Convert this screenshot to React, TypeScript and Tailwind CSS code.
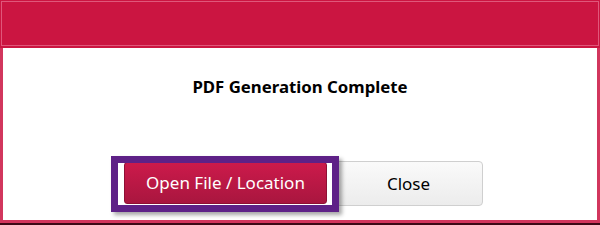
export default function App() {
  return (
    <div className="w-[600px] h-[225px] flex flex-col bg-[#d2365d] border-b-2 border-[#3d0a17] font-['Noto_Sans',sans-serif]">
      {/* title bar */}
      <div className="h-[48px] shrink-0 bg-[#cb1541] p-px pb-[2px]">
        <div className="h-full border border-[#e0577a]" />
      </div>

      {/* body */}
      <div className="relative flex-1 mx-[3px] mb-[3px] bg-white flex flex-col">
        <h1 className="mt-[29px] text-center text-[16.8px] font-bold leading-[20px] text-black">
          PDF Generation Complete
        </h1>

        <div className="mt-[64px] pl-[121px] flex items-start gap-[7px]">
          <button className="mt-px w-[203px] h-[42px] rounded-[3px] border border-[#8e1035] bg-gradient-to-b from-[#cc1a4b] to-[#a9163f] text-[17px] text-white">
            Open File / Location
          </button>
          <button className="w-[149px] h-[45px] rounded-[4px] border border-[#cfcfcf] bg-gradient-to-b from-[#fafafa] to-[#ececec] text-[17px] text-black">
            Close
          </button>
        </div>

        {/* highlight annotation */}
        <div className="absolute left-[108px] top-[108px] w-[228px] h-[56px] border-[7px] border-[#5e2187] shadow-[3px_3px_4px_rgba(0,0,0,0.35)]" />
      </div>
    </div>
  )
}
